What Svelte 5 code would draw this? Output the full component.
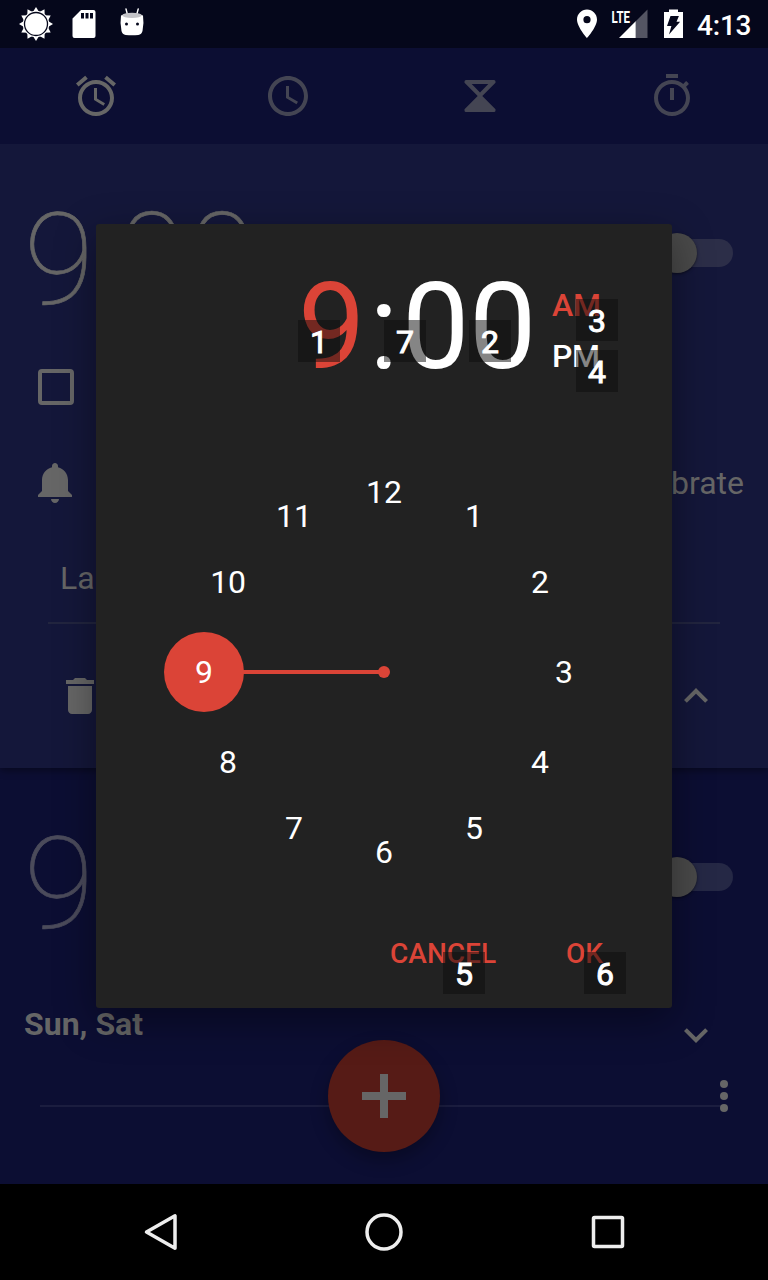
<script>
  const hours = Array.from({ length: 12 }, (_, i) => {
    const n = i + 1;
    const a = (n * Math.PI) / 6;
    return { n, x: 220 + 180 * Math.sin(a), y: 220 - 180 * Math.cos(a) + 11.3 };
  });

  const marks = [
    { n: 1, x: 298, y: 320 },
    { n: 7, x: 384, y: 320 },
    { n: 2, x: 469, y: 320 },
    { n: 3, x: 576, y: 299 },
    { n: 4, x: 576, y: 350 },
    { n: 5, x: 443, y: 952 },
    { n: 6, x: 584, y: 952 }
  ];
  const rays = Array.from({ length: 12 }, (_, i) => i * 30);
</script>

<div class="screen">
  <header class="status">
    <svg class="left" width="160" height="48" viewBox="0 0 160 48">
      <g fill="#fff">
        {#each rays as r}
          <path d="M36 7l4.300 7h-8.600z" transform="rotate({r} 36 24)" />
        {/each}
        <circle cx="36" cy="24" r="13.200" />
      </g>
      <circle cx="36" cy="24" r="11.500" fill="none" stroke="#05071b" stroke-width="1.300" />
      <path fill="#fff" fill-rule="evenodd" d="M81 10h12.500q2 0 2 2v24q0 2-2 2h-19q-2 0-2-2V18.500zM81 13v5.500h3V13zm4.500 0v5.500h3V13zm4.500 0v5.500h3V13z" />
      <path d="M126 9l1.300 5M138.200 9l-1.300 5" stroke="#fff" stroke-width="1.400" stroke-linecap="round" />
      <path fill="#fff" d="M121 15.500q11-5 22 0 1.200 8-.5 15.500-.8 3.600-4.200 4-6.300.6-12.600 0-3.400-.4-4.200-4-1.700-7.500-.5-15.500z" />
      <ellipse cx="132" cy="15.300" rx="9.800" ry="2.600" fill="#c3c3c8" />
      <circle cx="126.500" cy="24" r="1.500" fill="#05071b" />
      <circle cx="137.500" cy="24" r="1.500" fill="#05071b" />
    </svg>
    <div class="right">
      <svg width="112" height="48" viewBox="576 0 112 48">
        <path fill="#fff" fill-rule="evenodd" d="M587 9.600c-5.500 0-10 4.400-10 10 0 7.400 10 18.600 10 18.600s10-11.200 10-18.600c0-5.600-4.500-10-10-10zm0 6.500a3.600 3.600 0 1 1 0 7.200 3.600 3.600 0 0 1 0-7.200z" />
        <text class="lte" x="611.500" y="22.800" textLength="18.500" lengthAdjust="spacingAndGlyphs">LTE</text>
        <path fill="#545563" d="M647.500 9.500V38h-12V21.500z" />
        <path fill="#fff" d="M635.700 21.300V38H619z" />
        <path fill="#fff" d="M669 9.500h9V12h5v26h-19V12h5z" />
        <path fill="#05071b" d="M670.500 16h8.400l-2.400 5.800h3.600L669 34.500l2.400-8.500H667z" />
      </svg>
      <span class="clock">4:13</span>
    </div>
  </header>

  <nav class="tabs">
    <div class="tab on">
      <svg width="48" height="48" viewBox="0 0 24 24"><path d="M22 5.720l-4.600-3.860-1.290 1.530 4.600 3.860L22 5.720zM7.880 3.390L6.600 1.860 2 5.710l1.290 1.530 4.590-3.850zM12.500 8H11v6l4.750 2.850.75-1.230-4-2.370V8zM12 4c-4.970 0-9 4.030-9 9s4.020 9 9 9c4.970 0 9-4.030 9-9s-4.030-9-9-9zm0 16c-3.870 0-7-3.130-7-7s3.130-7 7-7 7 3.130 7 7-3.130 7-7 7z" /></svg>
    </div>
    <div class="tab">
      <svg width="48" height="48" viewBox="0 0 24 24"><path d="M11.990 2C6.470 2 2 6.480 2 12s4.470 10 9.990 10C17.520 22 22 17.520 22 12S17.520 2 11.990 2zM12 20c-4.420 0-8-3.580-8-8s3.580-8 8-8 8 3.580 8 8-3.580 8-8 8zm.5-13H11v6l5.250 3.150.75-1.230-4.500-2.670z" /></svg>
    </div>
    <div class="tab">
      <svg width="48" height="48" viewBox="0 0 48 48"><path fill-rule="evenodd" d="M10 8h28q1.500 0 1.500 1.500v1.300L26.300 24l13.200 13.200v1.300Q39.500 40 38 40H10q-1.500 0-1.500-1.500v-1.300L21.700 24 8.500 10.800V9.500Q8.500 8 10 8zm5.700 4l8.300 8.500 8.300-8.500z" /></svg>
    </div>
    <div class="tab">
      <svg width="48" height="48" viewBox="0 0 24 24"><path d="M15 1H9v2h6V1zm-4 13h2V8h-2v6zm8.030-6.610l1.420-1.420c-.43-.51-.9-.99-1.410-1.410l-1.420 1.420C16.070 4.740 14.120 4 12 4c-4.970 0-9 4.030-9 9s4.020 9 9 9 9-4.030 9-9c0-2.120-.74-4.070-1.970-5.610zM12 20c-3.870 0-7-3.130-7-7s3.130-7 7-7 7 3.130 7 7-3.130 7-7 7z" /></svg>
    </div>
  </nav>

  <main>
    <section class="alarm open">
      <div class="head"><span class="big">9:00</span><span class="switch"><i></i></span></div>
      <div class="row repeat"><span class="box"></span><span>Repeat</span></div>
      <div class="row ring">
        <svg width="48" height="48" viewBox="0 0 24 24"><path d="M11.500 22c1.100 0 2-.9 2-2h-4c0 1.100.9 2 2 2zm6.500-6v-5.500c0-3.070-2.130-5.640-5-6.320V3.500c0-.83-.67-1.500-1.500-1.500S10 2.670 10 3.500v.68c-2.870.68-5 3.250-5 6.320V16l-2 2v1h17v-1l-2-2z" /></svg>
        <span class="end">Vibrate</span>
      </div>
      <div class="label">Label</div>
      <div class="row foot">
        <svg width="48" height="48" viewBox="0 0 24 24"><path d="M6 19c0 1.100.9 2 2 2h8c1.100 0 2-.9 2-2V7H6v12zM19 4h-3.500l-1-1h-5l-1 1H5v2h14V4z" /></svg>
        <svg class="end" width="48" height="48" viewBox="0 0 24 24"><path d="M12 8l-6 6 1.410 1.410L12 10.830l4.590 4.580L18 14z" /></svg>
      </div>
    </section>

    <section class="alarm">
      <div class="head"><span class="big">9:00</span><span class="switch"><i></i></span></div>
      <div class="days">
        <b>Sun, Sat</b>
        <svg class="end" width="48" height="48" viewBox="0 0 24 24"><path d="M16.590 8.590L12 13.170 7.410 8.590 6 10l6 6 6-6z" /></svg>
      </div>
    </section>
  </main>

  <footer class="nav">
    <svg width="48" height="48" viewBox="0 0 48 48"><path d="M39 7.800v32.500L10.500 24z" /></svg>
    <svg width="48" height="48" viewBox="0 0 48 48"><circle cx="24" cy="24" r="17" /></svg>
    <svg width="48" height="48" viewBox="0 0 48 48"><rect x="9.500" y="9.500" width="29" height="29" rx="1" /></svg>
  </footer>

  <div class="fab"><svg width="44" height="44" viewBox="0 0 44 44"><path d="M18 0h8v18h18v8H26v18h-8V26H0v-8h18z" /></svg></div>
  <div class="more"><i></i><i></i><i></i></div>

  <div class="dialog">
    <div class="time">
      <div class="digits"><span class="hot">9</span><span class="colon">:</span><span>00</span></div>
      <div class="ampm"><span class="hot">AM</span><span>PM</span></div>
    </div>
    <svg class="face" width="440" height="440" viewBox="0 0 440 440">
      <path d="M40 220h180" stroke="#db4437" stroke-width="4" />
      <circle cx="220" cy="220" r="6" />
      <circle cx="40" cy="220" r="40" />
      {#each hours as h}
        <text x={h.x} y={h.y}>{h.n}</text>
      {/each}
    </svg>
    <div class="actions"><span>CANCEL</span><span>OK</span></div>
  </div>

  {#each marks as m}
    <div class="mark" style="left:{m.x}px;top:{m.y}px">{m.n}</div>
  {/each}
</div>

<style>
  :global(body) { margin: 0; background: #000; }
  .screen {
    position: relative;
    width: 768px;
    height: 1280px;
    overflow: hidden;
    display: flex;
    flex-direction: column;
    background: #0c0e33;
    color: #666;
    fill: #666;
    font: 32px/38px Roboto, sans-serif;
  }
  svg { display: block; flex: none; }
  .status { height: 48px; background: #05071b; display: flex; justify-content: space-between; flex: none; }
  .right { display: flex; align-items: center; padding-right: 16px; }
  .clock { color: #fff; font-weight: 500; font-size: 28px; line-height: 50px; padding-top: 4px; width: 55px; margin-left: 9px; white-space: nowrap; letter-spacing: -.2px; }
  .lte { fill: #fff; font: 700 17px Roboto, sans-serif; }
  .tabs { height: 96px; flex: none; display: grid; grid-template-columns: repeat(4, 1fr); place-items: center; }
  .tab { fill: #444553; }
  .tab.on { fill: #666; }
  main { flex: 1; overflow: hidden; }
  .alarm { height: 416px; box-sizing: border-box; position: relative; }
  .open { height: 624px; background: #14173a; box-shadow: 0 2px 8px rgba(0, 0, 0, .45); z-index: 1; }
  .head { height: 195px; display: flex; justify-content: space-between; padding: 0 35px 0 24px; box-sizing: border-box; }
  .big { font-size: 128px; line-height: 150px; font-weight: 100; margin-top: 41px; -webkit-text-stroke: .7px currentColor; }
  .alarm:not(.open) .big { color: #4b4b5b; }
  .switch { width: 76px; height: 28px; margin-top: 95px; border-radius: 14px; background: #2c2e48; display: flex; align-items: center; }
  .alarm:not(.open) .switch { background: #252845; }
  .switch i { width: 40px; height: 40px; border-radius: 50%; background: #4a4a4a; box-shadow: 0 1px 3px rgba(0, 0, 0, .5); flex: none; }
  .row { height: 96px; display: flex; align-items: center; }
  .repeat { padding-left: 38px; gap: 20px; }
  .box { width: 28px; height: 28px; border: 4px solid #666; border-radius: 4px; }
  .ring { padding: 0 24px 0 32px; }
  .end { margin-left: auto; }
  .label { height: 91px; line-height: 94px; margin: 0 48px; padding-left: 12px; border-bottom: 2px solid #22253f; }
  .foot { height: 144px; padding: 0 48px 0 56px; }
  .days { display: flex; padding: 42px 48px 0 24px; height: 142px; box-sizing: border-box; position: relative; }
  .days b { font-weight: 700; }
  .days .end { margin-top: 6px; }
  .days::after { content: ""; position: absolute; left: 40px; right: 45px; bottom: -2px; height: 2px; background: #1b1d3f; }
  .nav { height: 96px; flex: none; background: #000; display: flex; justify-content: center; gap: 176px; align-items: center; }
  .nav svg { fill: none; stroke: #eee; stroke-width: 3.500; stroke-linejoin: round; }
  .fab { position: absolute; z-index: 2; left: 328px; top: 1040px; width: 112px; height: 112px; border-radius: 50%; background: #561b16; display: grid; place-items: center; box-shadow: 0 8px 18px rgba(0, 0, 0, .3); }
  .more { position: absolute; z-index: 2; left: 720px; top: 1080px; display: grid; gap: 4px; }
  .more i { width: 8px; height: 8px; border-radius: 50%; background: #666; }
  .dialog {
    position: absolute;
    z-index: 3;
    left: 96px;
    top: 224px;
    width: 576px;
    height: 784px;
    background: #222;
    border-radius: 3px;
    box-shadow: 0 12px 40px rgba(0, 0, 0, .4);
    color: #fff;
    display: flex;
    flex-direction: column;
  }
  .time { height: 228px; display: flex; }
  .hot { color: #db4437; }
  .digits { font-size: 120px; line-height: 140px; margin: 33px 0 0 202px; display: flex; width: 254px; letter-spacing: -.5px; }
  .colon { width: 37px; text-align: center; }
  .ampm { display: flex; flex-direction: column; gap: 13px; font-weight: 500; padding-top: 62px; letter-spacing: -.3px; }
  .face { align-self: center; fill: #db4437; }
  .face text { fill: #fff; text-anchor: middle; font: 32px Roboto, sans-serif; }
  .actions { display: flex; justify-content: flex-end; gap: 70px; padding: 43px 69px 0 0; color: #db4437; font-size: 28px; font-weight: 500; }
  .mark {
    position: absolute;
    z-index: 4;
    width: 42px;
    height: 42px;
    line-height: 44px;
    text-align: center;
    background: rgba(12, 12, 12, .5);
    color: #fff;
    font-family: Roboto, sans-serif;
    font-size: 32px;
    font-weight: 400;
    -webkit-text-stroke: 1px #fff;
    paint-order: stroke;
    stroke-linejoin: round;
  }
</style>
